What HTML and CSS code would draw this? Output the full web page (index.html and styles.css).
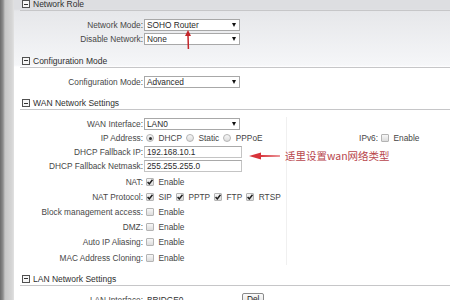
FILE: index.html
```html
<!DOCTYPE html>
<html lang="en">
<head>
<meta charset="utf-8">
<title>Network settings</title>
<link rel="stylesheet" href="styles.css">
</head>
<body>
<div class="frame">
  <div class="strip"></div>
  <main class="page">
    <section class="sec">
      <h2 class="sec-head first"><span class="tog"></span>Network Role</h2>
      <div class="rows">
        <div class="row"><span class="lbl">Network Mode:</span><div class="sel">SOHO Router<i class="caret"></i></div></div>
        <div class="row"><span class="lbl">Disable Network:</span><div class="sel">None<i class="caret"></i></div></div>
      </div>
    </section>

    <section class="sec">
      <h2 class="sec-head"><span class="tog"></span>Configuration Mode</h2>
      <div class="rows">
        <div class="row"><span class="lbl">Configuration Mode:</span><div class="sel">Advanced<i class="caret"></i></div></div>
      </div>
    </section>

    <section class="sec">
      <h2 class="sec-head"><span class="tog"></span>WAN Network Settings</h2>
      <div class="rows split">
        <div class="col-main">
          <div class="row"><span class="lbl">WAN Interface:</span><div class="sel">LAN0<i class="caret"></i></div></div>
          <div class="row"><span class="lbl">IP Address:</span>
            <div class="opts">
              <span class="rad on"></span><span class="opt">DHCP</span>
              <span class="rad"></span><span class="opt">Static</span>
              <span class="rad"></span><span class="opt">PPPoE</span>
            </div>
          </div>
          <div class="row"><span class="lbl">DHCP Fallback IP:</span><div class="inp">192.168.10.1</div></div>
          <div class="row"><span class="lbl">DHCP Fallback Netmask:</span><div class="inp">255.255.255.0</div></div>
          <div class="row cb gap-top"><span class="lbl">NAT:</span>
            <div class="opts"><span class="chk on"><svg viewBox="0 0 8 8"><path d="M1.6 4.1 L3.3 5.9 L6.5 1.7"/></svg></span><span class="opt">Enable</span></div>
          </div>
          <div class="row cb"><span class="lbl">NAT Protocol:</span>
            <div class="opts">
              <span class="chk on"><svg viewBox="0 0 8 8"><path d="M1.6 4.1 L3.3 5.9 L6.5 1.7"/></svg></span><span class="opt">SIP</span>
              <span class="chk on"><svg viewBox="0 0 8 8"><path d="M1.6 4.1 L3.3 5.9 L6.5 1.7"/></svg></span><span class="opt">PPTP</span>
              <span class="chk on"><svg viewBox="0 0 8 8"><path d="M1.6 4.1 L3.3 5.9 L6.5 1.7"/></svg></span><span class="opt">FTP</span>
              <span class="chk on"><svg viewBox="0 0 8 8"><path d="M1.6 4.1 L3.3 5.9 L6.5 1.7"/></svg></span><span class="opt">RTSP</span>
            </div>
          </div>
          <div class="row cb"><span class="lbl">Block management access:</span><div class="opts"><span class="chk"></span><span class="opt">Enable</span></div></div>
          <div class="row cb"><span class="lbl">DMZ:</span><div class="opts"><span class="chk"></span><span class="opt">Enable</span></div></div>
          <div class="row cb"><span class="lbl">Auto IP Aliasing:</span><div class="opts"><span class="chk"></span><span class="opt">Enable</span></div></div>
          <div class="row cb"><span class="lbl">MAC Address Cloning:</span><div class="opts"><span class="chk"></span><span class="opt">Enable</span></div></div>
        </div>
        <div class="col-side">
          <div class="row side"><span class="lbl side-lbl">IPv6:</span><div class="opts"><span class="chk"></span><span class="opt">Enable</span></div></div>
        </div>
      </div>
    </section>

    <section class="sec sec-lan">
      <h2 class="sec-head"><span class="tog"></span>LAN Network Settings</h2>
      <div class="rows">
        <div class="row"><span class="lbl">LAN Interface:</span><div class="lan"><span class="lan-val">BRIDGE0</span><button class="btn" type="button">Del</button></div></div>
      </div>
    </section>
  </main>

  <svg class="ann ann-up" viewBox="0 0 8 20" width="8" height="20">
    <polygon points="4,0 1,6 7,6" fill="#c4272b"/>
    <path d="M4 5 L4.4 19" stroke="#c4272b" stroke-width="1.5" fill="none"/>
  </svg>
  <div class="ann ann-note">
    <svg viewBox="0 0 32 8" width="32" height="8">
      <polygon points="0,4 12,0.5 12,7.5" fill="#d8333a"/>
      <polygon points="11,3 31,3.6 31,4.4 11,5" fill="#d8333a"/>
    </svg>
    <span class="note-text">适里设置wan网络类型</span>
  </div>
</div>
</body>
</html>
```

FILE: styles.css
```css
* { box-sizing: border-box; }

html, body {
  margin: 0;
  padding: 0;
  background: #fff;
}

body {
  font-family: "Liberation Sans", Arial, sans-serif;
  font-size: 8.3px;
  color: #444;
}

.frame {
  position: relative;
  display: flex;
  width: 450px;
  height: 300px;
  overflow: hidden;
}

.strip {
  flex: 0 0 14px;
  background: linear-gradient(to right, #6a6a6a 0, #8e8e8e 3px, #c6c6c6 5px, #d6d6d6 12px, #e2e2e2 14px);
}

.page {
  flex: 1;
  background: linear-gradient(to bottom, #dddee1 0, #dddee1 9px, #e6e7ea 11px, #f5f6f8 65px, #fff 67px, #fff 100%);
}

.sec + .sec { margin-top: 8.5px; }
.sec + .sec-lan { margin-top: 7.5px; }

.sec-head {
  display: flex;
  align-items: center;
  height: 13px;
  margin: 0 0 0 6px;
  padding-left: 2px;
  border-bottom: 1px solid #c6c6c8;
  font-size: 8.5px;
  font-weight: normal;
  line-height: 12px;
  color: #2f2f2f;
}

.sec-head.first { margin-top: -2px; }

.tog {
  position: relative;
  width: 8px;
  height: 8px;
  margin-right: 3px;
  border: 1px solid #505050;
  background: #f6f6f6;
}

.tog::after {
  content: "";
  position: absolute;
  left: 1px;
  right: 1px;
  top: 2.5px;
  height: 1px;
  background: #333;
}

.rows { padding-top: 7px; }

.split { display: flex; }

.col-main {
  flex: 0 0 273px;
  border-right: 1px solid #f0f0f0;
}

.col-side { flex: 1; }

.row {
  display: grid;
  grid-template-columns: 129px auto;
  column-gap: 1px;
  align-items: center;
  height: 14px;
}

.row.cb { height: 15.2px; }
.row.gap-top { margin-top: 1px; }

.row.side {
  grid-template-columns: 91px auto;
  margin-top: 14px;
}

.lbl {
  text-align: right;
  white-space: nowrap;
  color: #474747;
}

.sel {
  display: flex;
  align-items: center;
  justify-content: space-between;
  width: 96px;
  height: 12px;
  padding: 0 3px 0 2px;
  border: 1px solid #a8a8a8;
  background: #fff;
  color: #2a2a2a;
}

.caret {
  width: 0;
  height: 0;
  border-left: 2.5px solid transparent;
  border-right: 2.5px solid transparent;
  border-top: 4px solid #111;
}

.inp {
  display: flex;
  align-items: center;
  width: 98px;
  height: 12.5px;
  padding-left: 2px;
  border: 1px solid #c4c4c4;
  border-top-color: #a9a9a9;
  background: #fff;
  color: #2a2a2a;
}

.opts {
  display: flex;
  align-items: center;
  padding-left: 2px;
  white-space: nowrap;
}

.opt {
  margin: 0 4px 0 4.5px;
  color: #444;
}

.chk, .rad {
  display: inline-flex;
  align-items: center;
  justify-content: center;
  width: 8px;
  height: 8px;
  border: 1px solid #b4b4b4;
  background: linear-gradient(to bottom, #f7f7f7, #dcdcdc);
}

.chk { border-radius: 1px; }

.chk svg {
  width: 8px;
  height: 8px;
  flex: none;
}

.chk svg path {
  fill: none;
  stroke: #1e1e1e;
  stroke-width: 1.5;
}

.rad { border-radius: 50%; }

.rad.on::after {
  content: "";
  width: 3px;
  height: 3px;
  border-radius: 50%;
  background: #2e2e2e;
}

.lan {
  display: flex;
  align-items: center;
}

.lan-val {
  width: 98px;
  padding-left: 3px;
  color: #333;
}

.btn {
  height: 13px;
  padding: 0 4px;
  border: 1px solid #8a8a8a;
  border-radius: 2px;
  background: linear-gradient(to bottom, #fbfbfb, #dedede);
  font-family: "Liberation Sans", Arial, sans-serif;
  font-size: 8.3px;
  line-height: 11px;
  color: #222;
}

.ann { position: absolute; }

.ann-up {
  left: 184px;
  top: 30px;
}

.ann-note {
  left: 249px;
  top: 147px;
  display: flex;
  align-items: center;
}

.note-text {
  margin-left: 4px;
  font-family: "Noto Sans CJK SC", "Liberation Sans", sans-serif;
  font-size: 10.5px;
  line-height: 18px;
  color: #b8454c;
}
```
